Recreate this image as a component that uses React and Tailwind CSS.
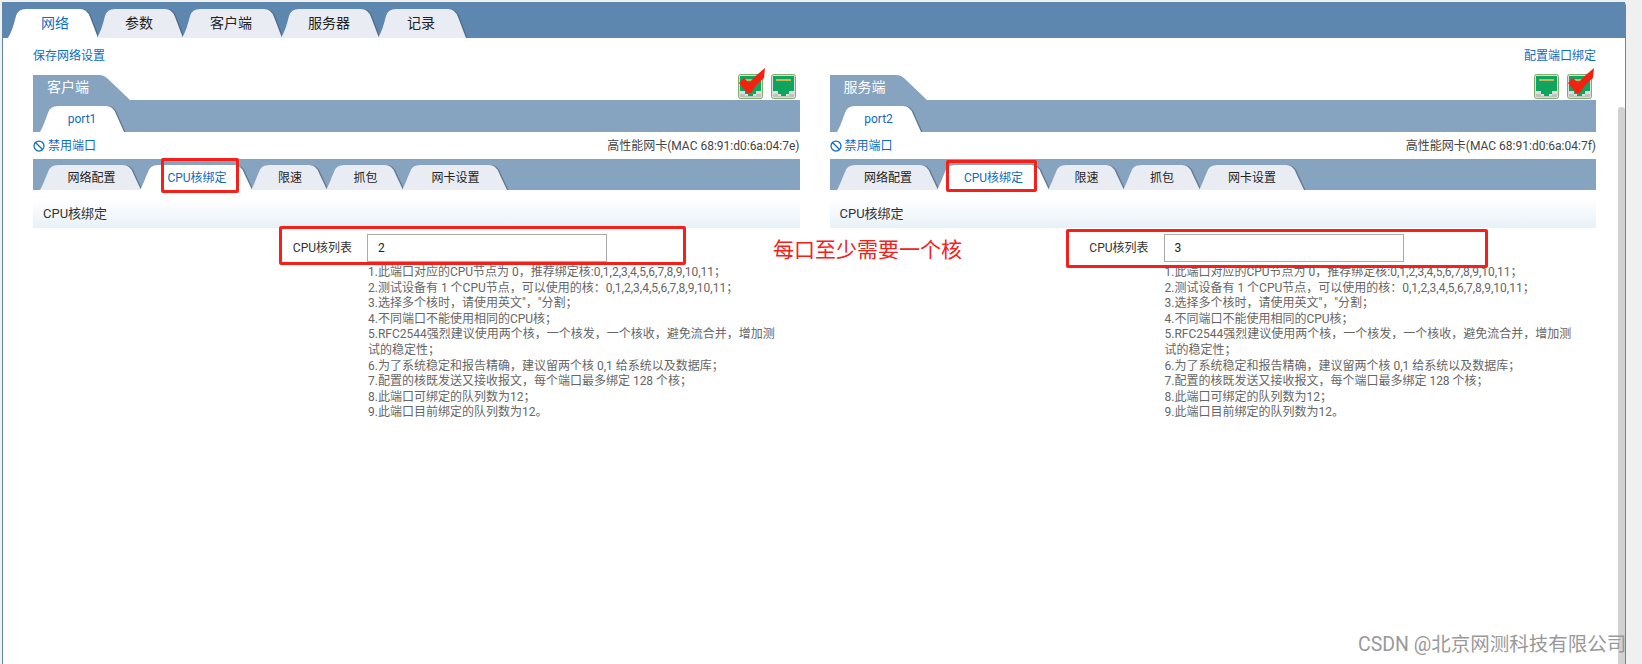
import React from 'react'
import { Ban } from 'lucide-react'

const FONT = 'font-["Roboto","Noto_Sans_CJK_SC",sans-serif]'

const TOP_TABS = [
  { label: '网络', w: 92, active: true, text: 'pl-[2px]' },
  { label: '参数', w: 88, text: 'pr-1' },
  { label: '客户端', w: 102, text: 'pr-1' },
  { label: '服务器', w: 100, text: 'pr-1' },
  { label: '记录', w: 90, text: 'pr-1' },
]

const SUB_TABS = [
  { label: '网络配置', w: 103 },
  { label: 'CPU核绑定', w: 114, active: true },
  { label: '限速', w: 78 },
  { label: '抓包', w: 79 },
  { label: '网卡设置', w: 107 },
]

const NOTES = [
  '1.此端口对应的CPU节点为 0，推荐绑定核:0,1,2,3,4,5,6,7,8,9,10,11；',
  '2.测试设备有 1 个CPU节点，可以使用的核：0,1,2,3,4,5,6,7,8,9,10,11；',
  '3.选择多个核时，请使用英文"，"分割；',
  '4.不同端口不能使用相同的CPU核；',
  '5.RFC2544强烈建议使用两个核，一个核发，一个核收，避免流合并，增加测试的稳定性；',
  '6.为了系统稳定和报告精确，建议留两个核 0,1 给系统以及数据库；',
  '7.配置的核既发送又接收报文，每个端口最多绑定 128 个核；',
  '8.此端口可绑定的队列数为12；',
  '9.此端口目前绑定的队列数为12。',
]

function tabPath(w, h) {
  return `M0 ${h} C4 ${h - 7} 6 ${h - 14} 8 7 Q10 0 18 0 L${w - 20} 0 Q${w - 13} 0 ${w - 10} 8 L${w - 2} ${h} Z`
}

function Tab({ label, w, h, active, text = '' }) {
  return (
    <div className="relative -mr-[3px] flex items-center justify-center" style={{ width: w, height: h }}>
      <svg className="absolute inset-0" width={w + 3} height={h}>
        <path d={tabPath(w, h)} transform="translate(1.5 0)" fill="#4a5d70" opacity="0.6" />
        <path d={tabPath(w, h)} fill={active ? '#ffffff' : '#e9edf3'} />
      </svg>
      <span className={`relative ${text} ${active ? 'text-[#0f6cbf]' : 'text-[#222]'}`}>{label}</span>
    </div>
  )
}

function PortIcon({ checked }) {
  return (
    <div className="relative h-[25px] w-[25px]">
      <svg width="25" height="25" viewBox="0 0 25 25">
        <rect x="0.5" y="0.5" width="24" height="24" rx="2" fill="#dcdedc" stroke="#84ad6c" />
        <rect x="2" y="2" width="21" height="15" fill="#0ea55f" />
        <path d="M2 17 H7 V20 H10 V22 H15 V20 H18 V17 H23 V13 H2 Z" fill="#0ea55f" />
        <rect x="5" y="5" width="15" height="2" fill="#c9b65a" />
        <path d="M2 20 H7 V22 H18 V20 H23 V23 H2 Z" fill="#bfc2bf" />
      </svg>
      {checked && (
        <svg className="absolute -top-[6px] left-0" width="28" height="26" viewBox="0 0 28 26">
          <path d="M1 15 L6 10 L11 15 Q18 7 27 0 L26 10 Q18 16 13 25 L9 25 Z" fill="#f5200f" />
        </svg>
      )}
    </div>
  )
}

function PortPanel({ side, port, mac, value, checkFirst }) {
  return (
    <div className="w-[767px]">
      {/* side tab and the two port icons */}
      <div className="flex h-[25px] items-end justify-between pr-1">
        <div className="relative h-[25px] w-[98px]">
          <svg className="absolute inset-0" width="98" height="25">
            <path d="M0 25 V0 H66 Q71 0 75 4 L97 25 Z" fill="#86a3c0" />
          </svg>
          <span className="relative block pl-[14px] text-[14px] leading-[25px] text-white">{side}</span>
        </div>
        <div className="flex gap-[8px] pb-px">
          <PortIcon checked={checkFirst} />
          <PortIcon checked={!checkFirst} />
        </div>
      </div>

      <div className="flex h-[32px] items-end bg-[#86a3c0] pl-[7px] text-[12px]">
        <Tab label={port} w={86} h={26} active text="pr-[2px]" />
      </div>

      <div className="flex h-[27px] items-center justify-between text-[12px]">
        <span className="flex items-center gap-[3px] text-[#0f6cbf]">
          <Ban size={12} strokeWidth={2.5} />
          禁用端口
        </span>
        <span className="text-[#444]">高性能网卡(MAC {mac})</span>
      </div>

      <div className="flex h-[31px] items-end bg-[#86a3c0] pl-[7px] text-[12px]">
        {SUB_TABS.map((t) => (
          <Tab key={t.label} label={t.label} w={t.w} h={25} active={t.active} />
        ))}
      </div>

      <div className="mt-[10px] h-[28px] bg-gradient-to-b from-white to-[#e7f1f9] pl-[10px] text-[13px] leading-[28px] text-[#333]">
        CPU核绑定
      </div>

      <div className="mt-[6px] flex items-center text-[12px]">
        <label className="w-[319px] text-right text-[#333]">CPU核列表</label>
        <div className="ml-[15px] h-[28px] w-[240px] border border-[#aaa] pl-[10px] text-[12px] leading-[26px] text-[#222]">{value}</div>
      </div>

      <div className="ml-[335px] mt-[3px] w-[410px] text-[12px] leading-[15.6px] text-[#666]">
        {NOTES.map((n) => (
          <div key={n}>{n}</div>
        ))}
      </div>
    </div>
  )
}

export default function App() {
  return (
    <div className={`relative h-[664px] w-[1642px] overflow-hidden bg-[#f0f0f0] pl-[2px] pt-[2px] ${FONT}`}>
      <div className="relative h-[662px] w-[1624px] rounded-tr-[4px] border-r border-l border-[#5d87af] bg-white">
        <div className="flex h-[36px] items-end bg-[#5d87af] pl-[5px] text-[14px]">
          {TOP_TABS.map((t) => (
            <Tab key={t.label} label={t.label} w={t.w} h={29} active={t.active} text={t.text} />
          ))}
        </div>

        <div className="pl-[30px] pr-[29px]">
          <div className="flex h-[37px] items-center justify-between pb-[2px] text-[12px] text-[#0f6cbf]">
            <span>保存网络设置</span>
            <span>配置端口绑定</span>
          </div>
          <div className="flex gap-[30px]">
            <PortPanel side="客户端" port="port1" mac="68:91:d0:6a:04:7e" value="2" checkFirst />
            <PortPanel side="服务端" port="port2" mac="68:91:d0:6a:04:7f" value="3" />
          </div>
        </div>

        {/* scrollbar */}
        <div className="absolute bottom-0 right-0 top-[105px] w-[7px] rounded-t-[3px] bg-[#d2d2d2]" />
      </div>

      {/* red annotations drawn on top of the screenshot */}
      <div className="absolute left-[161px] top-[158px] h-[35px] w-[78px] rounded-[2px] border-[3px] border-[#f5201a]" />
      <div className="absolute left-[946px] top-[160px] h-[32px] w-[91px] rounded-[2px] border-[3px] border-[#f5201a]" />
      <div className="absolute left-[279px] top-[226px] h-[39px] w-[407px] rounded-[2px] border-[3px] border-[#f5201a]" />
      <div className="absolute left-[1066px] top-[229px] h-[39px] w-[422px] rounded-[2px] border-[3px] border-[#f5201a]" />
      <div className="absolute left-[773px] top-[236px] text-[21px] leading-[28px] text-[#f5201a]">每口至少需要一个核</div>

      {/* watermark */}
      <div className="absolute left-[1358px] top-[632px] text-[19.5px] leading-[26px] text-[#999]">CSDN @北京网测科技有限公司</div>
    </div>
  )
}
